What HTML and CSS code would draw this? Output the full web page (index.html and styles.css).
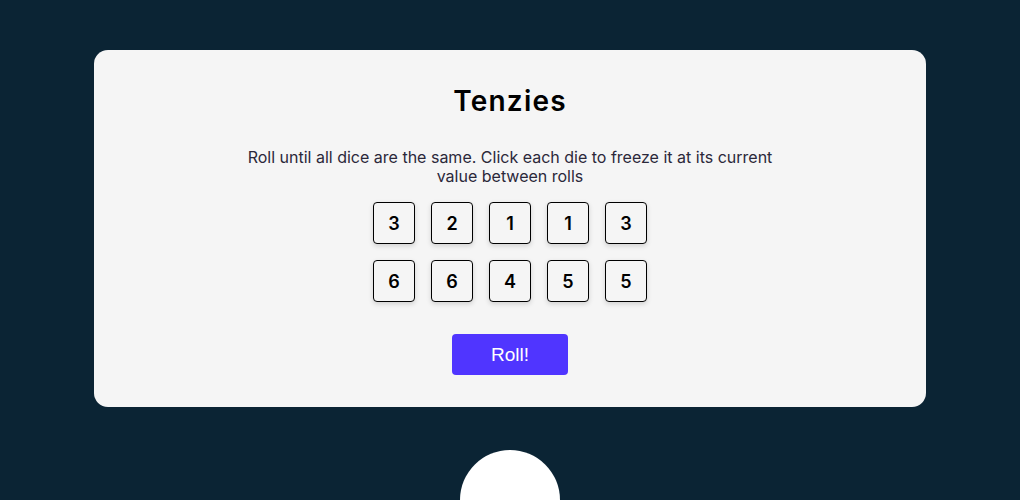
FILE: index.html
```html
<!DOCTYPE html>
<html lang="en">
<head>
<meta charset="utf-8">
<title>Tenzies</title>
<link rel="stylesheet" href="styles.css">
</head>
<body>
<div class="page">
  <main class="card">
    <h1 class="title">Tenzies</h1>
    <p class="instructions">Roll until all dice are the same. Click each die to freeze it at its current value between rolls</p>
    <div class="dice">
      <button class="die">3</button>
      <button class="die">2</button>
      <button class="die">1</button>
      <button class="die">1</button>
      <button class="die">3</button>
      <button class="die">6</button>
      <button class="die">6</button>
      <button class="die">4</button>
      <button class="die">5</button>
      <button class="die">5</button>
    </div>
    <button class="roll">Roll!</button>
  </main>
  <div class="circle"></div>
</div>
</body>
</html>
```
FILE: styles.css
```css
html, body {
  margin: 0;
  padding: 0;
}
body {
  background: #0B2434;
  font-family: Inter, "Noto Sans", sans-serif;
  height: 500px;
  overflow: hidden;
}
.page {
  display: flex;
  flex-direction: column;
  align-items: center;
  padding-top: 50px;
  height: 450px;
  overflow: hidden;
}
.card {
  box-sizing: border-box;
  width: 832px;
  height: 357px;
  flex-shrink: 0;
  background: #F5F5F5;
  border-radius: 14px;
  padding: 32px 0 32px;
  display: flex;
  flex-direction: column;
  align-items: center;
}
.title {
  margin: 0;
  font-size: 28px;
  line-height: 38px;
  font-weight: 600;
  color: #000;
  letter-spacing: 1.2px;
}
.instructions {
  margin: 28px 0 0;
  width: 540px;
  text-align: center;
  font-size: 16px;
  line-height: 19px;
  color: #2B283A;
}
.dice {
  margin-top: 16px;
  display: grid;
  grid-template-columns: repeat(5, 42px);
  grid-auto-rows: 42px;
  gap: 16px;
}
.die {
  box-sizing: border-box;
  width: 42px;
  height: 42px;
  padding: 0;
  background: #F5F5F5;
  border: 1px solid #000;
  border-radius: 4px;
  box-shadow: 0 2px 5px rgba(0, 0, 0, 0.15);
  font-family: Inter, sans-serif;
  font-weight: 600;
  font-size: 18px;
  color: #000;
}
.roll {
  margin-top: 32px;
  width: 116px;
  height: 41px;
  flex-shrink: 0;
  border: none;
  border-radius: 4px;
  background: #5035FF;
  color: #fff;
  font-family: "Liberation Sans", Arial, sans-serif;
  font-size: 19px;
}
.circle {
  margin-top: 43px;
  width: 100px;
  height: 100px;
  border-radius: 50%;
  background: #fff;
  flex-shrink: 0;
}
```
